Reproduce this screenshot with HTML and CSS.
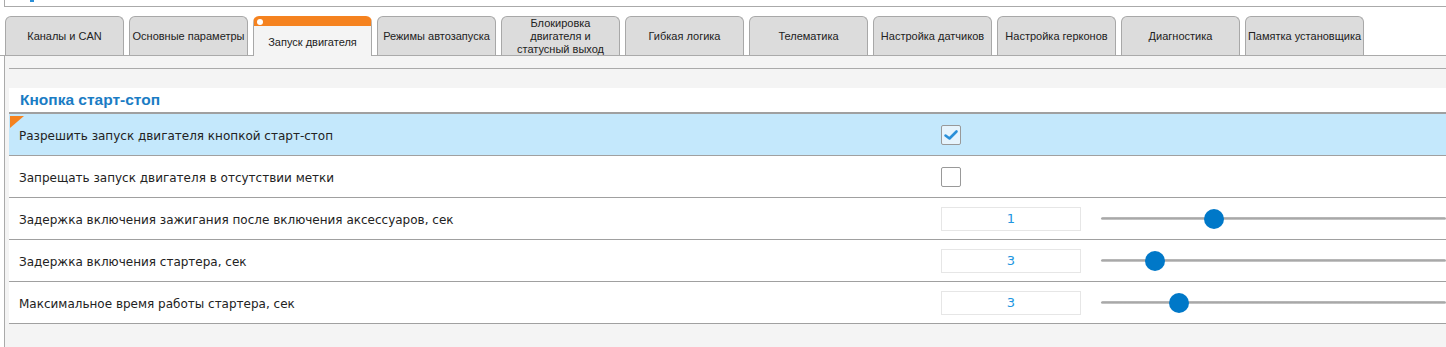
FILE: index.html
```html
<!DOCTYPE html>
<html lang="ru">
<head>
  <meta charset="UTF-8">
  <meta name="viewport" content="width=device-width, initial-scale=1.0">
  <title>Запуск двигателя</title>
  <link rel="stylesheet" href="styles.css">
</head>
<body>
  <div class="topbar"><span class="topbar-mark"></span></div>

  <nav class="tabs">
    <div class="tab">Каналы и CAN</div>
    <div class="tab">Основные параметры</div>
    <div class="tab active"><span class="tab-dot"></span>Запуск двигателя</div>
    <div class="tab">Режимы автозапуска</div>
    <div class="tab">Блокировка<br>двигателя и<br>статусный выход</div>
    <div class="tab">Гибкая логика</div>
    <div class="tab">Телематика</div>
    <div class="tab">Настройка датчиков</div>
    <div class="tab">Настройка герконов</div>
    <div class="tab">Диагностика</div>
    <div class="tab">Памятка установщика</div>
  </nav>

  <div class="panel">
    <div class="panel-head"></div>

    <section class="group">
      <h2 class="group-title">Кнопка старт-стоп</h2>

      <div class="row selected">
        <span class="changed"></span>
        <div class="label">Разрешить запуск двигателя кнопкой старт-стоп</div>
        <div class="control">
          <span class="check checked">
            <svg width="18" height="18" viewBox="0 0 18 18"><path d="M3.5 9.5 L7.5 12.5 L14.5 5.5" fill="none" stroke="#2a8fd8" stroke-width="2.6" stroke-linecap="round" stroke-linejoin="round"/></svg>
          </span>
        </div>
      </div>

      <div class="row">
        <div class="label">Запрещать запуск двигателя в отсутствии метки</div>
        <div class="control"><span class="check"></span></div>
      </div>

      <div class="row">
        <div class="label">Задержка включения зажигания после включения аксессуаров, сек</div>
        <div class="control"><div class="num">1</div></div>
        <div class="slider"><span class="thumb" style="left: 103px"></span></div>
      </div>

      <div class="row">
        <div class="label">Задержка включения стартера, сек</div>
        <div class="control"><div class="num">3</div></div>
        <div class="slider"><span class="thumb" style="left: 44px"></span></div>
      </div>

      <div class="row">
        <div class="label">Максимальное время работы стартера, сек</div>
        <div class="control"><div class="num">3</div></div>
        <div class="slider"><span class="thumb" style="left: 68px"></span></div>
      </div>
    </section>
  </div>
</body>
</html>
```

FILE: styles.css
```css
html, body {
  height: 100%;
}

body {
  margin: 0;
  background-color: #fff;
  font-family: "DejaVu Sans", "Liberation Sans", sans-serif;
  color: #222;
  overflow: hidden;
  display: flex;
  flex-direction: column;
}

.topbar {
  position: relative;
  height: 6px;
  margin-left: 4px;
  border-left: 1px solid #aaa;
  border-bottom: 1px solid #aaa;
}
.topbar-mark {
  position: absolute;
  left: 25px;
  top: 0;
  width: 4px;
  height: 2px;
  background-color: #2a8fd8;
}

.tabs {
  display: flex;
  gap: 5px;
  align-items: flex-end;
  margin-top: 9px;
  padding-left: 5px;
  border-bottom: 1px solid #aaa;
  height: 39px;
}

.tab {
  box-sizing: border-box;
  width: 119px;
  height: 39px;
  flex: none;
  display: flex;
  align-items: center;
  justify-content: center;
  text-align: center;
  padding: 0 2px;
  font-family: "Liberation Sans", sans-serif;
  font-size: 11px;
  line-height: 13px;
  white-space: nowrap;
  background-color: #dcdcdc;
  border: 1px solid #a8a8a8;
  border-bottom: none;
  border-radius: 6px 6px 0 0;
}

.tab.active {
  position: relative;
  height: 40px;
  margin-bottom: -1px;
  background-color: #f4f4f4;
  border-top: 10px solid #f5821f;
  padding-top: 2px;
}
.tab-dot {
  position: absolute;
  left: 3px;
  top: -7px;
  width: 6px;
  height: 6px;
  border-radius: 50%;
  background-color: #fff;
}

.panel {
  flex: 1;
  margin-left: 4px;
  padding-left: 4px;
  border-left: 1px solid #aaa;
  background-color: #f4f4f4;
}

.panel-head {
  height: 12px;
  border-bottom: 1px solid #aaa;
}

.group {
  margin-top: 19px;
  background-color: #fff;
}

.group-title {
  margin: 0;
  height: 24px;
  padding-left: 11px;
  font-family: "Liberation Sans", sans-serif;
  font-size: 15.5px;
  line-height: 24px;
  font-weight: bold;
  color: #1a7cc4;
  border-bottom: 2px solid #a0a0a0;
}

.row {
  position: relative;
  display: grid;
  grid-template-columns: 932px 160px 1fr;
  align-items: center;
  height: 41px;
  border-bottom: 1px solid #a0a0a0;
  font-size: 12px;
}
.row.selected {
  background-color: #c4e8fc;
}

.changed {
  position: absolute;
  left: 1px;
  top: 2px;
  width: 0;
  height: 0;
  border-top: 12px solid #f5821f;
  border-right: 14px solid transparent;
}

.label {
  padding-left: 10px;
  padding-top: 2px;
}

.control {
  display: flex;
  align-items: center;
}

.check {
  box-sizing: border-box;
  width: 20px;
  height: 20px;
  border: 1px solid #999;
  border-radius: 2px;
  background-color: #fff;
  display: flex;
  align-items: center;
  justify-content: center;
}
.check.checked {
  background-color: #e6f4fd;
}

.num {
  box-sizing: border-box;
  width: 140px;
  height: 24px;
  line-height: 22px;
  text-align: center;
  border: 1px solid #e6e6e6;
  background-color: #fff;
  color: #2196e0;
  font-size: 13px;
}

.slider {
  position: relative;
  height: 20px;
}
.slider::before {
  content: "";
  position: absolute;
  left: 0;
  right: 0;
  top: 8px;
  height: 3px;
  border-radius: 2px;
  background: linear-gradient(#bdbdbd, #a4a4a4 60%, #d8d8d8);
}
.thumb {
  position: absolute;
  top: 0;
  width: 20px;
  height: 20px;
  border-radius: 50%;
  background-color: #0078c8;
}
```
